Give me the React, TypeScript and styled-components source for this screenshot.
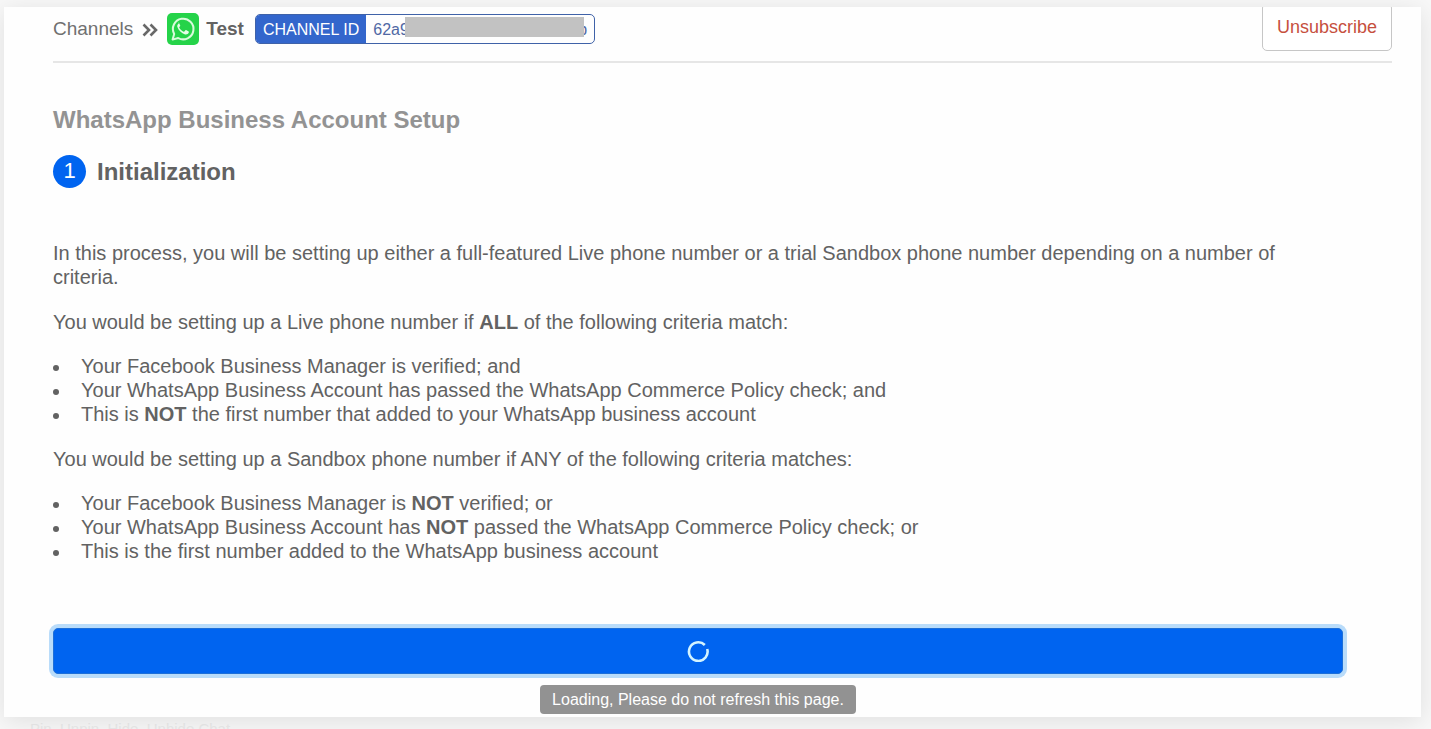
import React from "react";
import styled, { createGlobalStyle } from "styled-components";

const GlobalStyle = createGlobalStyle`
  * { box-sizing: border-box; }
  body {
    margin: 0;
    background: #f8f8f8;
    color: #626262;
    font: 20px/24px "Liberation Sans", Arial, sans-serif;
    overflow: hidden;
  }
`;

const Page = styled.div`
  display: flow-root;
`;

const Card = styled.main`
  position: relative;
  margin: 7px 10px 0 4px;
  padding: 0 29px 3px 49px;
  background: #fefefe;
  box-shadow: 0 4px 24px rgba(0, 0, 0, 0.1);
  overflow: hidden;
`;

const Header = styled.header`
  display: flex;
  justify-content: space-between;
  margin-top: -4px;
  padding-bottom: 10px;
  border-bottom: 2px solid #e6e6e6;
`;

const Breadcrumb = styled.nav`
  display: flex;
  align-items: center;
  padding-top: 4px;
  font-size: 19px;
`;

const CrumbLink = styled.a`
  color: #707070;
  text-decoration: none;
`;

const Chevrons = styled.svg`
  width: 16px;
  height: 14px;
  margin: 2px 9px 0;
`;

const Logo = styled.svg`
  width: 32px;
  height: 32px;
`;

const ChannelName = styled.strong`
  margin: 0 11px 0 7px;
`;

const IdBadge = styled.div`
  display: flex;
  height: 30px;
  border: 1px solid #3f62a8;
  border-radius: 5px;
  overflow: hidden;
  font-size: 16px;
  line-height: 29px;
`;

const IdLabel = styled.span`
  padding: 0 7px;
  background: #3366cc;
  color: #fff;
`;

const IdValue = styled.span`
  position: relative;
  display: flex;
  justify-content: space-between;
  width: 228px;
  padding: 0 7px;
  color: #5068a4;
`;

const Mask = styled.span`
  position: absolute;
  top: 2px;
  right: 10px;
  bottom: 6px;
  left: 39px;
  background: #c2c2c2;
`;

const Unsubscribe = styled.button`
  height: 48px;
  padding: 0 14px;
  border: 1px solid #c6c6c6;
  border-radius: 5px;
  background: #fff;
  color: #c64f3e;
  font: inherit;
  font-size: 18px;
`;

const Content = styled.section`
  padding: 43px 49px 0 0;
`;

const Title = styled.h1`
  margin: 0;
  color: #939393;
  font-size: 24px;
  line-height: 28px;
`;

const Step = styled.h2`
  display: flex;
  align-items: center;
  gap: 11px;
  margin: 21px 0 53px;
  font-size: 24px;
  line-height: 32px;
`;

const StepNumber = styled.span`
  width: 33px;
  height: 33px;
  border-radius: 50%;
  background: #0064f0;
  color: #fff;
  font-size: 22px;
  font-weight: 400;
  text-align: center;
`;

const Paragraph = styled.p`
  margin: 21px 0 20px;
`;

const List = styled.ul`
  margin: 0 0 20px;
  padding: 0;
  list-style: none;
`;

const Item = styled.li`
  display: flex;
  align-items: center;
  gap: 22px;

  &::before {
    content: "";
    width: 6px;
    height: 6px;
    margin-top: 4px;
    border-radius: 50%;
    background: #626262;
  }
`;

const Action = styled.div`
  display: flex;
  flex-direction: column;
  align-items: center;
  gap: 11px;
  padding-top: 45px;
`;

const LoadingButton = styled.button`
  display: flex;
  align-items: center;
  justify-content: center;
  width: 100%;
  height: 46px;
  padding: 0;
  border: 1px solid #1d6fd8;
  border-radius: 5px;
  background: #0064f0;
  box-shadow: 0 0 0 4px #b9dcfa;
`;

const Hint = styled.div`
  padding: 0 12px;
  border-radius: 4px;
  background: #929292;
  color: #fff;
  font-size: 16px;
  line-height: 29px;
`;

const Behind = styled.p`
  margin: 0 30px;
  color: #ebebeb;
  font-size: 15px;
`;

export default function App() {
  return (
    <Page>
      <GlobalStyle />
      <Card>
        <Header>
          <Breadcrumb aria-label="Breadcrumb">
            <CrumbLink href="#channels">Channels</CrumbLink>
            <Chevrons viewBox="0 0 16 14" fill="none" stroke="#686868" strokeWidth="2.6" aria-hidden="true">
              <path d="M1.5 1.5 7 7l-5.500 5.500M8.500 1.500 14 7l-5.500 5.500" />
            </Chevrons>
            <Logo viewBox="0 0 32 32" role="img" aria-label="WhatsApp">
              <rect width="32" height="32" rx="5" fill="#25d349" />
              <path d="M5.600 26.600 7.200 21A10.300 10.300 0 1 1 11.200 25Z" fill="none" stroke="#d9fbdc" strokeWidth="2" strokeLinejoin="round" />
              <path d="M12.300 10.400c-.4-.1-.9.1-1.200.5-.8.9-1.100 2-.7 3.200 1.200 3.500 4.100 6.200 7.700 7.300 1.500.4 3.300-.5 3.700-1.900.1-.5.1-1-.1-1.100l-2.600-1.300c-.3-.1-.6 0-.8.300l-1 1.200c-.2.200-.4.200-.7.100-1.900-.8-3.300-2.100-4.300-3.900-.1-.3-.1-.5.1-.7l.8-1c.1-.2.100-.4 0-.6l-1.100-2.500c-.1-.3-.4-.4-.8-.4Z" fill="#e4fde6" />
            </Logo>
            <ChannelName>Test</ChannelName>
            <IdBadge>
              <IdLabel>CHANNEL ID</IdLabel>
              <IdValue>
                <span>62a9</span>
                <span>b</span>
                <Mask />
              </IdValue>
            </IdBadge>
          </Breadcrumb>
          <Unsubscribe type="button">Unsubscribe</Unsubscribe>
        </Header>
        <Content>
          <Title>WhatsApp Business Account Setup</Title>
          <Step>
            <StepNumber>1</StepNumber>
            Initialization
          </Step>
          <Paragraph>
            In this process, you will be setting up either a full-featured Live phone number or a trial Sandbox phone number depending on a number of criteria.
          </Paragraph>
          <Paragraph>
            You would be setting up a Live phone number if <b>ALL</b> of the following criteria match:
          </Paragraph>
          <List>
            <Item><span>Your Facebook Business Manager is verified; and</span></Item>
            <Item><span>Your WhatsApp Business Account has passed the WhatsApp Commerce Policy check; and</span></Item>
            <Item><span>This is <b>NOT</b> the first number that added to your WhatsApp business account</span></Item>
          </List>
          <Paragraph>
            You would be setting up a Sandbox phone number if ANY of the following criteria matches:
          </Paragraph>
          <List>
            <Item><span>Your Facebook Business Manager is <b>NOT</b> verified; or</span></Item>
            <Item><span>Your WhatsApp Business Account has <b>NOT</b> passed the WhatsApp Commerce Policy check; or</span></Item>
            <Item><span>This is the first number added to the WhatsApp business account</span></Item>
          </List>
          <Action>
            <LoadingButton type="button" aria-label="Loading">
              <svg width="22" height="22" viewBox="0 0 22 22" fill="none" aria-hidden="true">
                <path d="M17.800 5A9.300 9.300 0 1 0 20.200 9" stroke="#d4f4ff" strokeWidth="2.600" />
              </svg>
            </LoadingButton>
            <Hint role="status">Loading, Please do not refresh this page.</Hint>
          </Action>
        </Content>
      </Card>
      <Behind>Pin, Unpin, Hide, Unhide Chat</Behind>
    </Page>
  );
}
